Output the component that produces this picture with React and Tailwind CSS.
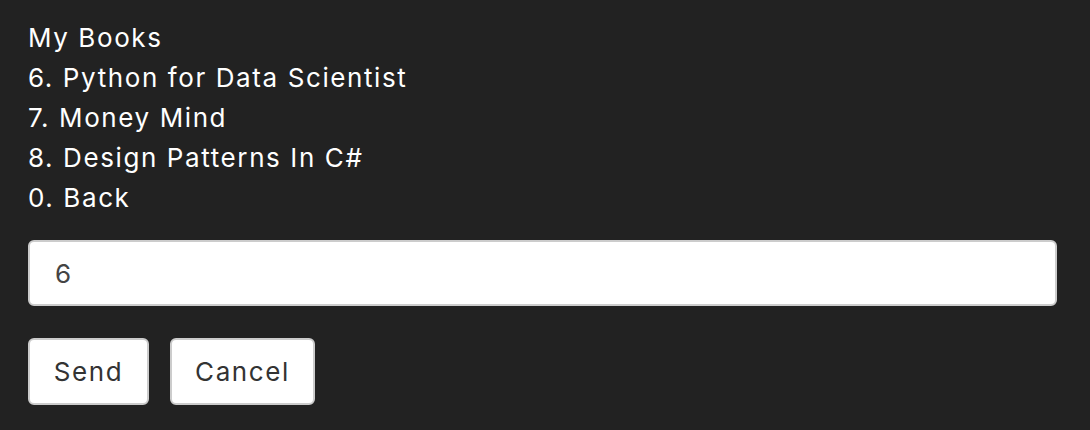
import React from 'react';

const items = ['My Books', '6. Python for Data Scientist', '7. Money Mind', '8. Design Patterns In C#', '0. Back'];

export default function App() {
    return (
        <div className="min-h-[430px] w-full bg-[#222222] px-[28px] pt-[18px] font-['Inter',sans-serif] tracking-[1.6px]">
            <div className="flex flex-col text-[26px] leading-[40px] text-white">
                {items.map((t) => (
                    <div key={t}>{t}</div>
                ))}
            </div>
            <input
                defaultValue="6"
                className="mt-[22px] block h-[66px] w-[1029px] rounded-[6px] border-2 border-[#cccccc] bg-white px-[25px] text-[26px] tracking-[1.6px] text-[#444444] outline-none"
            />
            <div className="mt-[32px] flex gap-[21px]">
                <button className="h-[67px] w-[121px] rounded-[6px] border-2 border-[#cccccc] bg-white text-[26px] tracking-[1.6px] text-[#333333]">Send</button>
                <button className="h-[67px] w-[145px] rounded-[6px] border-2 border-[#cccccc] bg-white text-[26px] tracking-[1.6px] text-[#333333]">Cancel</button>
            </div>
        </div>
    );
}
